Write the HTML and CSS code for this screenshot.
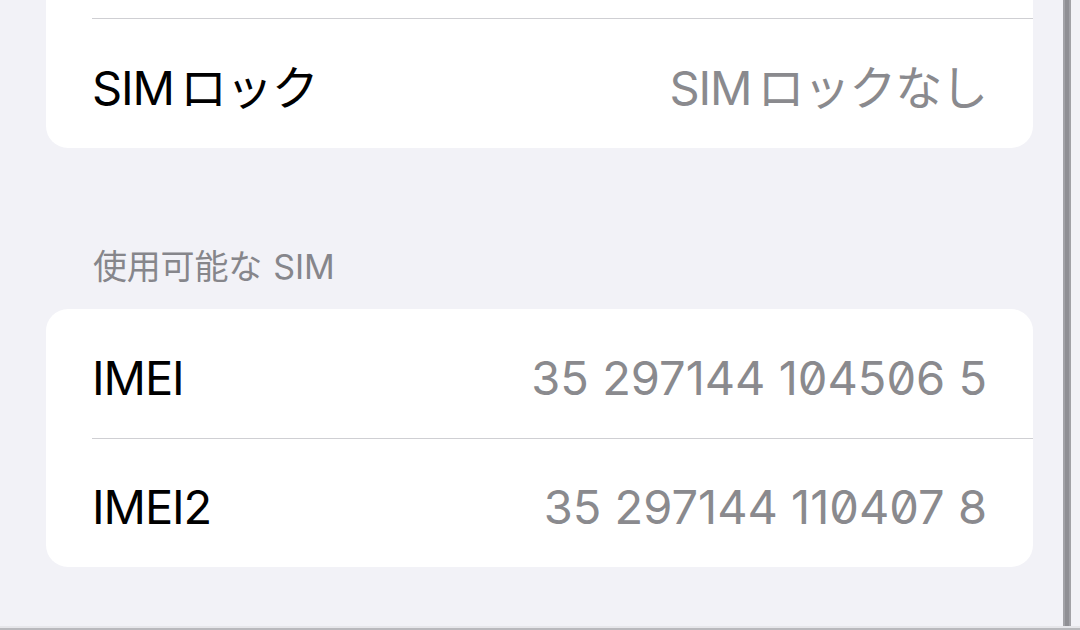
FILE: index.html
```html
<!DOCTYPE html>
<html lang="ja">
<head>
<meta charset="utf-8">
<title>情報</title>
<link rel="stylesheet" href="styles.css">
</head>
<body>
<div class="screen">
  <div class="frame">
    <main class="content">
      <section class="group group-continued">
        <div class="row row-stub"></div>
        <div class="row">
          <span class="label">SIM ロック</span>
          <span class="value">SIM ロックなし</span>
        </div>
      </section>

      <h2 class="group-header">使用可能な SIM</h2>
      <section class="group">
        <div class="row">
          <span class="label">IMEI</span>
          <span class="value num">35 297144 104506 5</span>
        </div>
        <div class="row">
          <span class="label">IMEI2</span>
          <span class="value num">35 297144 110407 8</span>
        </div>
      </section>
    </main>
    <div class="edge"></div>
    <div class="gutter"></div>
  </div>
  <div class="bottom-rule"></div>
</div>
</body>
</html>
```

FILE: styles.css
```css
* { box-sizing: border-box; }

html, body {
  margin: 0;
  padding: 0;
  width: 1080px;
  height: 630px;
  overflow: hidden;
  background: #f2f2f7;
  font-family: Inter, "Noto Sans CJK JP", sans-serif;
  -webkit-font-smoothing: antialiased;
}

.screen {
  display: flex;
  flex-direction: column;
  height: 630px;
}

.frame {
  flex: 1;
  display: flex;
  min-height: 0;
}

.content {
  flex: 1;
  padding: 0 30px 0 46px;
}

.edge {
  width: 8px;
  background: #8f8f94;
  box-shadow: inset 2px 0 0 #a2a2a7, inset -2px 0 0 #a2a2a7;
}

.gutter {
  width: 9px;
  background: #f2f2f7;
}

.bottom-rule {
  height: 2px;
  background: #b9b9bd;
  box-shadow: 0 -2px 0 #e6e6ea;
}

.group {
  background: #fff;
  border-radius: 22px;
  overflow: hidden;
}

.group-continued {
  border-top-left-radius: 0;
  border-top-right-radius: 0;
}

.row {
  position: relative;
  display: flex;
  align-items: center;
  justify-content: space-between;
  height: 129px;
  padding: 8px 46px 0 46px;
}

.row + .row::before {
  content: "";
  position: absolute;
  top: 0;
  left: 46px;
  right: 0;
  height: 1px;
  background: #cfcfd3;
}

.row-stub {
  height: 18px;
  padding: 0;
}

.row-stub + .row {
  height: 130px;
  padding-top: 2px;
}

.label,
.value {
  font-size: 47px;
  letter-spacing: -1.1px;
  word-spacing: -6px;
}

.label { color: #000; }
.value { color: #8a8a8e; }

.num {
  font-feature-settings: "zero";
  letter-spacing: 0;
  word-spacing: 0;
}

.group-header {
  margin: 0;
  padding: 99px 0 22px 47px;
  font-size: 34px;
  font-weight: 400;
  color: #86868b;
  letter-spacing: -0.2px;
  word-spacing: 2px;
  line-height: 40px;
}
```
